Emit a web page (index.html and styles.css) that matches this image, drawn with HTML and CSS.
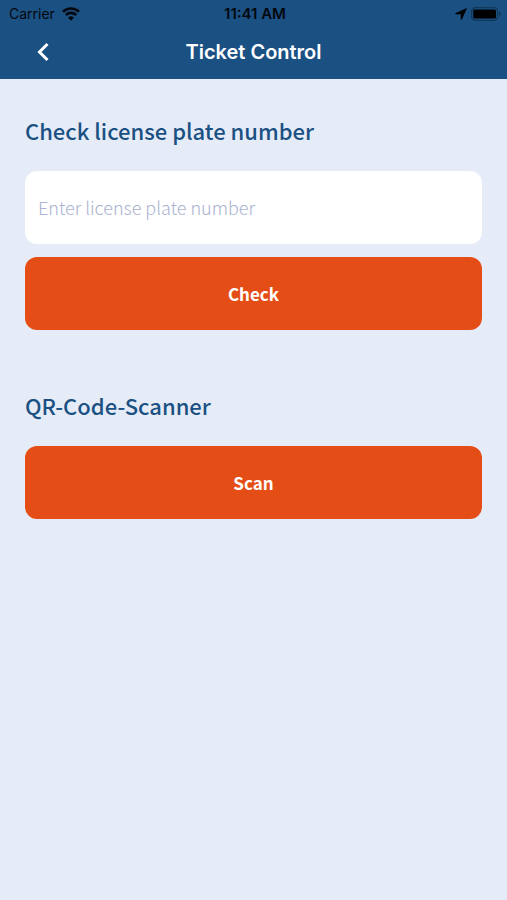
FILE: index.html
```html
<!DOCTYPE html>
<html lang="en">
<head>
  <meta charset="UTF-8" />
  <meta name="viewport" content="width=device-width, initial-scale=1.0"/>
  <title>Ticket Control</title>
  <link rel="stylesheet" href="styles.css">
</head>
<body>

  <header>
    <div class="status-bar">
      <div class="carrier">
        <span>Carrier</span>
        <svg class="wifi" viewBox="0 0 18 14" width="18" height="14" aria-hidden="true">
          <path d="M1 4.8a11.5 11.5 0 0 1 16 0" />
          <path d="M3.8 8a7.5 7.5 0 0 1 10.4 0" />
          <path class="dot" d="M9 13.8 6 10.7a4.3 4.3 0 0 1 6 0z" />
        </svg>
      </div>
      <div class="time">11:41 AM</div>
      <div class="indicators">
        <svg viewBox="0 0 12 12" width="12" height="12" aria-hidden="true">
          <path d="M11.2.3c.4-.2.7.1.5.5L7 11.300c-.3.600-1.200.4-1.200-.3V6.300H1c-.8 0-.9-.9-.2-1.200z" />
        </svg>
        <svg viewBox="0 0 30 14" width="30" height="14" aria-hidden="true">
          <rect class="battery-case" x=".6" y=".6" width="26" height="12.8" rx="4" />
          <rect x="2.2" y="2.4" width="22.8" height="9" rx="1.5" />
          <path class="battery-cap" d="M28 4.600c2 .8 2 4 0 4.800z" />
        </svg>
      </div>
    </div>
    <div class="nav-bar">
      <button class="back-btn" aria-label="Back">
        <svg viewBox="0 0 12 20" width="12" height="20" aria-hidden="true">
          <path d="M10.5 2 2.5 10l8 8" />
        </svg>
      </button>
      <h1>Ticket Control</h1>
    </div>
  </header>

  <main>
    <section>
      <h2><label for="plate">Check license plate number</label></h2>
      <input type="text" id="plate" class="plate-input" placeholder="Enter license plate number" />
      <button class="action-btn">Check</button>
    </section>

    <section>
      <h2>QR-Code-Scanner</h2>
      <button class="action-btn">Scan</button>
    </section>
  </main>

</body>
</html>
```

FILE: styles.css
```css
* {
  box-sizing: border-box;
}

body {
  font-family: "Noto Sans CJK JP", "Noto Sans", sans-serif;
  margin: 0;
  background: #e5ecf8;
}

header {
  font-family: Inter, "Liberation Sans", sans-serif;
  background: #1b5083;
}

.status-bar {
  display: grid;
  grid-template-columns: 1fr auto 1fr;
  align-items: center;
  height: 27px;
  padding: 0 6px 0 9px;
  color: #03080e;
  font-size: 14px;
}

.carrier,
.indicators {
  display: flex;
  align-items: center;
  gap: 7px;
}

.indicators {
  justify-content: flex-end;
  gap: 4px;
}

.wifi {
  fill: none;
  stroke: #03080e;
  stroke-width: 2.6;
}

.wifi .dot {
  fill: #03080e;
  stroke: none;
}

.time {
  font-size: 15px;
  font-weight: 600;
}

.battery-case {
  fill: none;
  stroke: #103858;
  stroke-width: 1.2;
}

.battery-cap {
  fill: #103858;
}

.nav-bar {
  display: grid;
  grid-template-columns: 1fr auto 1fr;
  align-items: center;
  height: 52px;
  padding: 0 29px 2px;
}

.back-btn {
  display: flex;
  justify-self: start;
  padding: 8px;
  background: none;
  border: none;
  cursor: pointer;
}

.back-btn path {
  fill: none;
  stroke: white;
  stroke-width: 3;
}

h1 {
  margin: 0;
  color: white;
  font-size: 20px;
  font-weight: 600;
}

main {
  padding: 34px 25px;
}

section {
  display: flex;
  flex-direction: column;
  margin-bottom: 58px;
}

h2 {
  margin: 0 0 24px;
  color: #1b5083;
  font-size: 22px;
  line-height: 34px;
  font-weight: 500;
}

.plate-input,
.action-btn {
  width: 100%;
  height: 73px;
  border: none;
  border-radius: 12px;
  font-family: inherit;
}

.plate-input {
  margin-bottom: 13px;
  padding: 0 13px 2px;
  background: white;
  color: #1b5083;
  font-size: 18px;
  font-weight: 300;
}

.plate-input::placeholder {
  color: #a9b2d0;
  opacity: 1;
}

.action-btn {
  padding: 0 0 1px;
  background: #e54d16;
  color: white;
  font-size: 17px;
  font-weight: 700;
  cursor: pointer;
}
```
